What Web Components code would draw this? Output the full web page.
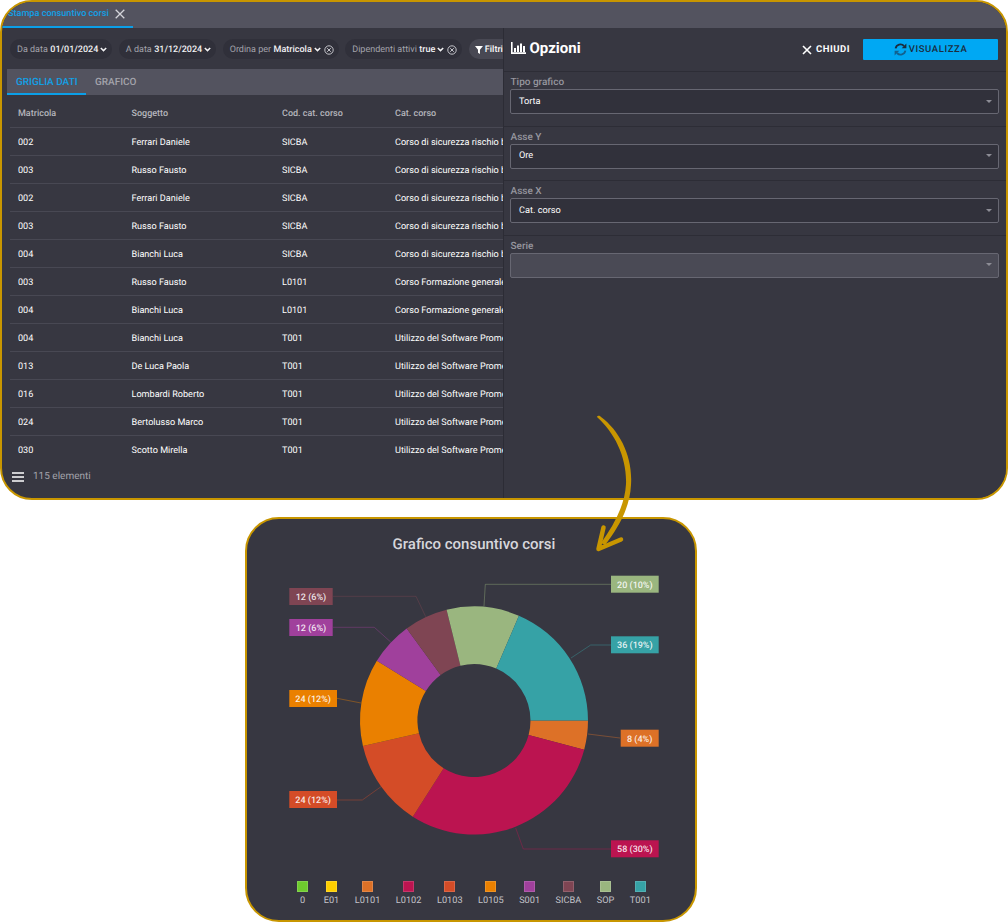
<!DOCTYPE html>
<html lang="it">
<head>
<meta charset="utf-8">
<title>Stampa consuntivo corsi</title>
<style>
  html, body { margin: 0; background: #fff; }
  body { font-family: Roboto, "Liberation Sans", sans-serif; text-rendering: geometricPrecision; position: relative; width: 1008px; height: 922px; overflow: hidden; }
</style>
</head>
<body>
<app-window>
  <tab-bar label="Stampa consuntivo corsi"></tab-bar>
  <report-pane slot="left">
    <filter-chip label="Da data" value="01/01/2024"></filter-chip>
    <filter-chip label="A data" value="31/12/2024"></filter-chip>
    <filter-chip label="Ordina per" value="Matricola" clearable></filter-chip>
    <filter-chip label="Dipendenti attivi" value="true" clearable></filter-chip>
  </report-pane>
  <options-panel slot="right">
    <option-field label="Tipo grafico" value="Torta"></option-field>
    <option-field label="Asse Y" value="Ore"></option-field>
    <option-field label="Asse X" value="Cat. corso"></option-field>
    <option-field label="Serie" disabled></option-field>
  </options-panel>
</app-window>
<chart-card></chart-card>
<flow-arrow></flow-arrow>

<script>
class AppWindow extends HTMLElement {
  constructor() {
    super();
    this.attachShadow({ mode: 'open' });
    this.shadowRoot.innerHTML = `
      <style>
        :host {
          display: flex;
          flex-direction: column;
          box-sizing: border-box;
          width: 1008px;
          height: 500px;
          border: 2px solid #c89600;
          border-radius: 32px;
          background: #373741;
          overflow: hidden;
          color: #fff;
        }
        .body { flex: 1; min-height: 0; display: flex; }
      </style>
      <slot></slot>
      <div class="body">
        <slot name="left"></slot>
        <slot name="right"></slot>
      </div>
    `;
  }
}

class TabBar extends HTMLElement {
  constructor() {
    super();
    this.attachShadow({ mode: 'open' });
    this.shadowRoot.innerHTML = `
      <style>
        :host { display: flex; height: 26px; background: #53535f; flex: none; }
        .tab {
          box-sizing: border-box;
          width: 131px;
          height: 26px;
          padding: 0 0 1px 6px;
          display: flex;
          align-items: center;
          gap: 6px;
          border-bottom: 2px solid #0b9fe8;
          color: #12a0e6;
          font-size: 9.1px;
          font-weight: 500;
          white-space: nowrap;
        }
        svg { width: 10px; height: 10px; }
      </style>
      <div class="tab">
        <span>${this.getAttribute('label')}</span>
        <svg viewBox="0 0 10 10"><path d="M.7.7l8.6 8.6M9.3.7L.7 9.3" stroke="#d4d4da" stroke-width="1.3" fill="none"/></svg>
      </div>
    `;
  }
}

class FilterChip extends HTMLElement {
  constructor() {
    super();
    this.attachShadow({ mode: 'open' });
    const clear = this.hasAttribute('clearable')
      ? `<svg class="clear" viewBox="0 0 10 10"><circle cx="5" cy="5" r="4.2" fill="none" stroke="#c4c4ca" stroke-width="1"/><path d="M3.2 3.2l3.6 3.6M6.8 3.2l-3.6 3.6" stroke="#c4c4ca" stroke-width="1"/></svg>`
      : '';
    this.shadowRoot.innerHTML = `
      <style>
        :host {
          display: inline-flex;
          align-items: center;
          flex: none;
          box-sizing: border-box;
          height: 20px;
          padding: 1px 5px 0 7px;
          border-radius: 10px;
          background: #30303a;
          font-size: 9px;
          white-space: nowrap;
          color: #a3a3ab;
        }
        b { font-weight: 500; color: #f2f2f4; margin-left: 2.5px; }
        .chev { width: 7px; height: 5px; margin-left: 2px; }
        .clear { width: 10px; height: 10px; margin-left: 3px; }
      </style>
      <span>${this.getAttribute('label')}</span><b>${this.getAttribute('value')}</b>
      <svg class="chev" viewBox="0 0 7 5"><path d="M.8 1l2.7 2.6L6.2 1" fill="none" stroke="#f2f2f4" stroke-width="1.5"/></svg>
      ${clear}
    `;
  }
}

class ReportPane extends HTMLElement {
  constructor() {
    super();
    this.attachShadow({ mode: 'open' });
    const rows = [
      ['002', 'Ferrari Daniele', 'SICBA', 'Corso di sicurezza rischio b'],
      ['003', 'Russo Fausto', 'SICBA', 'Corso di sicurezza rischio b'],
      ['002', 'Ferrari Daniele', 'SICBA', 'Corso di sicurezza rischio b'],
      ['003', 'Russo Fausto', 'SICBA', 'Corso di sicurezza rischio b'],
      ['004', 'Bianchi Luca', 'SICBA', 'Corso di sicurezza rischio b'],
      ['003', 'Russo Fausto', 'L0101', 'Corso Formazione generale'],
      ['004', 'Bianchi Luca', 'L0101', 'Corso Formazione generale'],
      ['004', 'Bianchi Luca', 'T001', 'Utilizzo del Software Prome'],
      ['013', 'De Luca Paola', 'T001', 'Utilizzo del Software Prome'],
      ['016', 'Lombardi Roberto', 'T001', 'Utilizzo del Software Prome'],
      ['024', 'Bertolusso Marco', 'T001', 'Utilizzo del Software Prome'],
      ['030', 'Scotto Mirella', 'T001', 'Utilizzo del Software Prome']
    ];
    const cells = r => r.map(c => `<span>${c}</span>`).join('');
    this.shadowRoot.innerHTML = `
      <style>
        :host {
          display: flex;
          flex-direction: column;
          flex: none;
          box-sizing: border-box;
          width: 501px;
          height: 470px;
          overflow: hidden;
        }
        .filters {
          flex: none;
          display: flex;
          gap: 6.5px;
          height: 41px;
          padding: 11px 0 0 8px;
          box-sizing: border-box;
          overflow: hidden;
        }
        .filtri {
          display: inline-flex;
          align-items: center;
          flex: none;
          gap: 2px;
          box-sizing: border-box;
          height: 20px;
          padding: 1px 0 0 6px;
          width: 34px;
          border-radius: 10px 0 0 10px;
          background: #484853;
          font-size: 9px;
          font-weight: 500;
          overflow: hidden;
          white-space: nowrap;
        }
        .tabs {
          flex: none;
          display: flex;
          margin-left: 5px;
          height: 26px;
          background: #53535f;
          font-size: 10px;
          font-weight: 500;
          white-space: nowrap;
        }
        .tabs span { box-sizing: border-box; height: 26px; padding: 0 9px; line-height: 27px; color: #a3a3ab; }
        .tabs .on { flex: none; width: 79px; color: #12a0e6; border-bottom: 2px solid #0b9fe8; }
        .grid { flex: 1; min-height: 0; overflow: hidden; margin-left: 8px; font-size: 9.1px; }
        .row {
          display: grid;
          grid-template-columns: 113.5px 150.5px 113px 1fr;
          box-sizing: border-box;
          height: 28px;
          padding: 2px 0 0 8px;
          align-items: center;
          border-bottom: 1.5px solid #484853;
          white-space: nowrap;
          overflow: hidden;
          color: #fff;
        }
        .head { height: 33px; padding-top: 5px; color: #b5b5bc; font-weight: 500; font-size: 9px; }
        .foot {
          flex: none;
          height: 39px;
          padding: 0 0 2px 10px;
          display: flex;
          align-items: center;
          gap: 9px;
          font-size: 10px;
          color: #a3a3ab;
        }
      </style>
      <div class="filters">
        <slot></slot>
        <span class="filtri">
          <svg width="9" height="10" viewBox="0 0 9 10"><path d="M0 .5h9L5.6 4.6V9.5L3.4 8V4.6z" fill="#fff"/></svg>
          Filtri
        </span>
      </div>
      <div class="tabs"><span class="on">GRIGLIA DATI</span><span>GRAFICO</span></div>
      <div class="grid">
        <div class="row head">${cells(['Matricola', 'Soggetto', 'Cod. cat. corso', 'Cat. corso'])}</div>
        ${rows.map(r => `<div class="row">${cells(r)}</div>`).join('')}
      </div>
      <div class="foot">
        <svg width="12" height="10" viewBox="0 0 12 10"><path d="M0 1h12M0 5h12M0 9h12" stroke="#fff" stroke-width="1.6"/></svg>
        <span>115 elementi</span>
      </div>
    `;
  }
}

class OptionsPanel extends HTMLElement {
  constructor() {
    super();
    this.attachShadow({ mode: 'open' });
    this.shadowRoot.innerHTML = `
      <style>
        :host {
          display: block;
          flex: none;
          box-sizing: border-box;
          width: 503px;
          height: 470px;
          border-left: 1.5px solid #2c2c35;
          background: #373741;
        }
        header {
          box-sizing: border-box;
          height: 44px;
          display: flex;
          align-items: center;
          padding: 0 8px 0 6.5px;
          border-bottom: 1px solid #2d2d36;
        }
        .title { display: flex; align-items: center; gap: 4px; font-size: 15px; font-weight: 700; margin-top: -3px; }
        .close {
          margin-left: auto;
          display: flex;
          align-items: center;
          gap: 4px;
          font-size: 9.5px;
          font-weight: 700;
          letter-spacing: .5px;
        }
        .show {
          box-sizing: border-box;
          margin-left: 13px;
          width: 135px;
          height: 21px;
          display: flex;
          align-items: center;
          justify-content: center;
          gap: 2px;
          background: #00a8f3;
          border-radius: 1px;
          color: #1b2c3e;
          font-size: 9.5px;
          font-weight: 500;
          letter-spacing: .6px;
        }
      </style>
      <header>
        <div class="title">
          <svg width="15" height="12" viewBox="0 0 15 12"><path d="M.8 0v11.1H15" fill="none" stroke="#fff" stroke-width="1.6"/><path d="M3 6h2v4H3zM6 3.5h2V10H6zM9 1.5h2V10H9zM12 4h2v6h-2z" fill="#fff"/></svg>
          <span>Opzioni</span>
        </div>
        <div class="close">
          <svg width="10" height="10" viewBox="0 0 10 10"><path d="M1 1l8 8M9 1l-8 8" stroke="#fff" stroke-width="1.6"/></svg>
          <span>CHIUDI</span>
        </div>
        <div class="show">
          <svg width="13" height="13" viewBox="0 0 13 13"><path d="M1.6 5.4A4.9 4.9 0 0 1 10 3" fill="none" stroke="#1b2c3e" stroke-width="1.9"/><path d="M12.4.6v4.7H7.7z" fill="#1b2c3e"/><path d="M11.4 7.6A4.9 4.9 0 0 1 3 10" fill="none" stroke="#12618f" stroke-width="1.9"/><path d="M.6 12.4V7.7h4.7z" fill="#12618f"/></svg>
          <span>VISUALIZZA</span>
        </div>
      </header>
      <slot></slot>
    `;
  }
}

class OptionField extends HTMLElement {
  constructor() {
    super();
    this.attachShadow({ mode: 'open' });
    const disabled = this.hasAttribute('disabled');
    this.shadowRoot.innerHTML = `
      <style>
        :host {
          display: block;
          box-sizing: border-box;
          height: 54.5px;
          padding: 5px 7px 0 6px;
          border-bottom: ${disabled ? '0' : '1px solid #2d2d36'};
        }
        label { display: block; height: 12px; line-height: 12px; padding-left: .5px; font-size: 10px; font-weight: 500; color: #96969e; }
        .select {
          box-sizing: border-box;
          height: 25px;
          display: flex;
          align-items: center;
          justify-content: space-between;
          padding: 0 6px 1px 8px;
          border: 1.5px solid #676772;
          border-radius: 2px;
          background: ${disabled ? '#4a4a55' : '#31313b'};
          font-size: 9.2px;
          color: #fff;
        }
        i { width: 0; height: 0; border: 3px solid transparent; border-top: 3px solid #8d8d96; border-bottom: 0; }
      </style>
      <label>${this.getAttribute('label')}</label>
      <div class="select"><span>${this.getAttribute('value') || ''}</span><i></i></div>
    `;
  }
}

class ChartCard extends HTMLElement {
  constructor() {
    super();
    this.attachShadow({ mode: 'open' });
    // offsets of the card on the page, data below is in page coordinates
    const ox = 245, oy = 517;
    const cx = 474 - ox, cy = 720.5 - oy, R = 114, r = 56.5;
    const slices = [
      { v: 8, c: '#dd7127', t: '8 (4%)', box: [620.7, 729.7, 38], line: '620,738 588,734' },
      { v: 58, c: '#bb1450', t: '58 (30%)', box: [611, 840.3, 47.7], line: '611,849 523.3,849 515.7,828' },
      { v: 24, c: '#d44c27', t: '24 (12%)', box: [289.3, 791, 47.7], line: '337,800 362.3,800 381,786.7' },
      { v: 24, c: '#ea8000', t: '24 (12%)', box: [289.3, 690, 47.7], line: '337,698.3 361,703' },
      { v: 12, c: '#a0409c', t: '12 (6%)', box: [289.3, 619, 43.4], line: '333,627.3 374.3,627.3 390.7,642' },
      { v: 12, c: '#7f4553', t: '12 (6%)', box: [289.3, 588, 43.4], line: '333,596.3 416,596.3 425.7,616.7' },
      { v: 20, c: '#9ab67f', t: '20 (10%)', box: [611, 575.7, 47.7], line: '611,584.3 485.3,584.3 484,606' },
      { v: 36, c: '#36a2a6', t: '36 (19%)', box: [611, 636.3, 47.7], line: '611,645 590.7,645 571,658' }
    ];
    const total = slices.reduce((s, x) => s + x.v, 0);
    let a = 0, wedges = '', labels = '';
    slices.forEach(s => {
      const b = a + s.v / total * Math.PI * 2;
      const large = b - a > Math.PI ? 1 : 0;
      const pt = (rad, ang) => `${(cx + rad * Math.cos(ang)).toFixed(2)} ${(cy + rad * Math.sin(ang)).toFixed(2)}`;
      wedges += `<path d="M${pt(R, a)}A${R} ${R} 0 ${large} 1 ${pt(R, b)}L${pt(r, b)}A${r} ${r} 0 ${large} 0 ${pt(r, a)}Z" fill="${s.c}"/>`;
      const pts = s.line.split(' ').map(p => { const [x, y] = p.split(','); return `${x - ox},${y - oy}`; }).join(' ');
      const [bx, by, bw] = s.box;
      labels += `<polyline points="${pts}" fill="none" stroke="${s.c}" stroke-opacity=".4" stroke-width="1"/>
        <rect x="${bx - ox}" y="${by - oy}" width="${bw}" height="17" fill="${s.c}"/>
        <text x="${bx - ox + bw / 2}" y="${by - oy + 11.8}" text-anchor="middle">${s.t}</text>`;
      a = b;
    });
    const legend = [['0', '#6ecc2e'], ['E01', '#ffcf00'], ['L0101', '#dd7127'], ['L0102', '#bb1450'], ['L0103', '#d44c27'],
      ['L0105', '#ea8000'], ['S001', '#a0409c'], ['SICBA', '#7f4553'], ['SOP', '#9ab67f'], ['T001', '#36a2a6']];
    this.shadowRoot.innerHTML = `
      <style>
        :host {
          display: block;
          box-sizing: border-box;
          position: relative;
          width: 452px;
          height: 405px;
          margin: 17px 0 0 245px;
          border: 2px solid #c89600;
          border-radius: 34px;
          background: #373741;
          overflow: hidden;
        }
        h2 { margin: 16px 0 0 6px; text-align: center; font-size: 15px; line-height: 18px; font-weight: 500; color: #d6d6db; }
        svg { position: absolute; left: -2px; top: -2px; }
        svg text { font: 500 9px Roboto, "Liberation Sans", sans-serif; fill: #fff; fill-opacity: .88; }
        .legend {
          position: absolute;
          left: 6px;
          right: 0;
          top: 362px;
          display: flex;
          justify-content: center;
          gap: 15.5px;
          font-size: 9.2px;
          color: #c4c4ca;
        }
        .legend div { display: flex; flex-direction: column; align-items: center; gap: 3px; }
        .legend i { width: 9px; height: 9px; border: .5px solid rgba(255,255,255,.15); box-sizing: content-box; }
      </style>
      <h2>Grafico consuntivo corsi</h2>
      <svg width="452" height="405" viewBox="0 0 452 405">${wedges}${labels}</svg>
      <div class="legend">
        ${legend.map(l => `<div><i style="background:${l[1]}"></i><span>${l[0]}</span></div>`).join('')}
      </div>
    `;
  }
}

class FlowArrow extends HTMLElement {
  constructor() {
    super();
    this.attachShadow({ mode: 'open' });
    this.shadowRoot.innerHTML = `
      <style>
        :host { position: absolute; left: 590px; top: 410px; width: 50px; height: 150px; }
        svg { display: block; }
      </style>
      <svg width="50" height="150" viewBox="590 410 50 150">
        <path d="M597 417C598 415 600 416 601 417C620 431 633 457 631 485C630 507 619 527 605 545L601 543C614 525 625 505 626 484C627 458 615 433 597 417Z" fill="#c89600"/>
        <path d="M603.5 527.5L598.5 549L621 539.5" fill="none" stroke="#c89600" stroke-width="4.5" stroke-linecap="round" stroke-linejoin="round"/>
      </svg>
    `;
  }
}

customElements.define('app-window', AppWindow);
customElements.define('tab-bar', TabBar);
customElements.define('filter-chip', FilterChip);
customElements.define('report-pane', ReportPane);
customElements.define('options-panel', OptionsPanel);
customElements.define('option-field', OptionField);
customElements.define('chart-card', ChartCard);
customElements.define('flow-arrow', FlowArrow);
</script>
</body>
</html>
